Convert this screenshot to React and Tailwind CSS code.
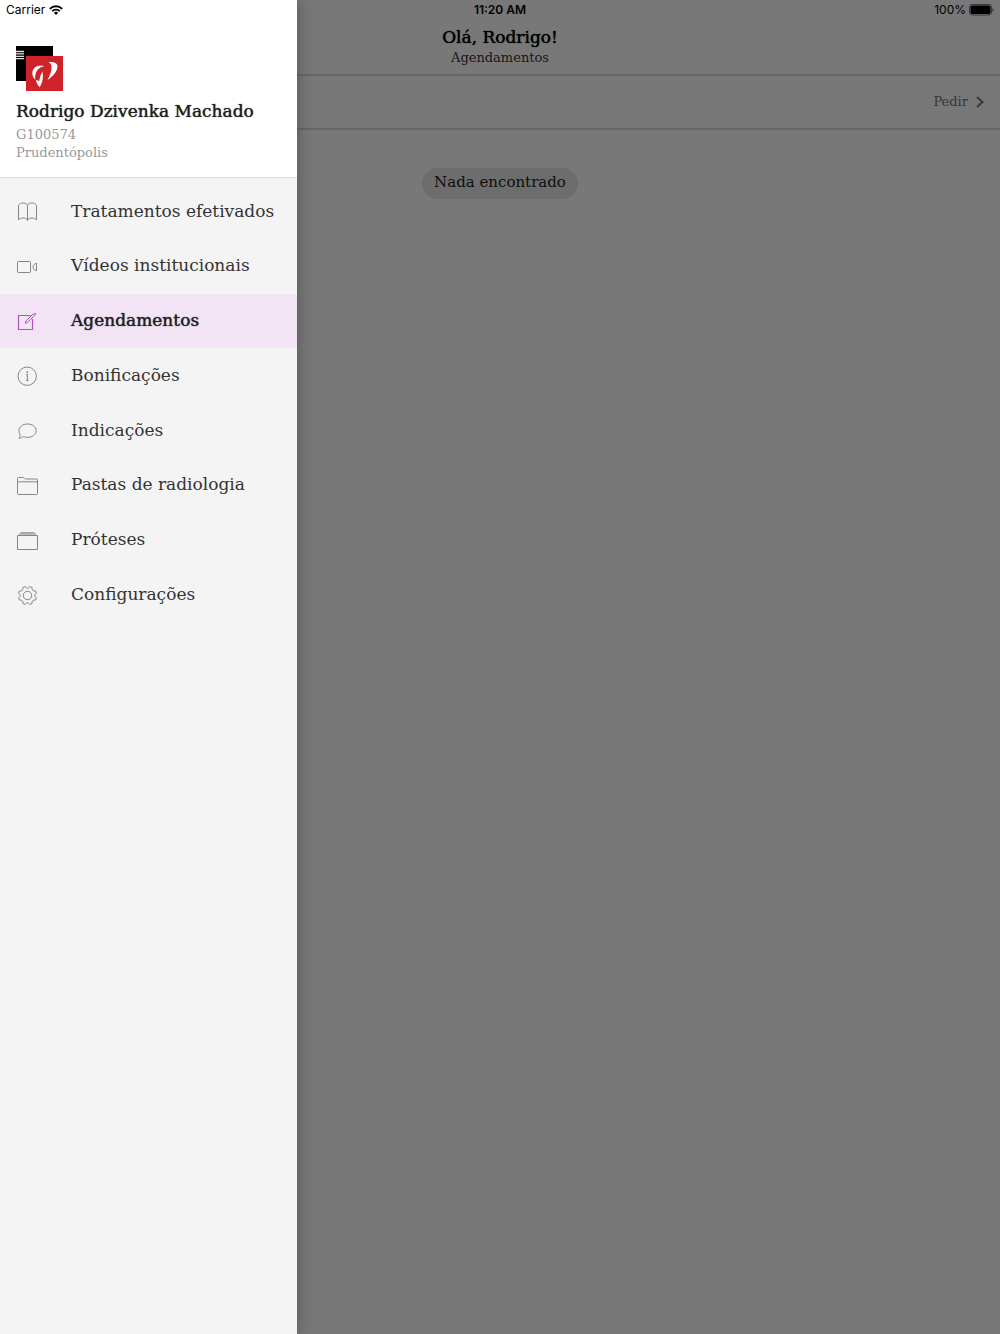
import { useState } from "react";
import clsx from "clsx";

const Icon = ({ children }) => (
	<svg
		viewBox="0 0 24 24"
		className="h-6 w-6 shrink-0"
		fill="none"
		stroke="currentColor"
		strokeWidth="1"
		strokeLinejoin="round"
		aria-hidden="true"
	>
		{children}
	</svg>
);

const BookIcon = () => (
	<Icon>
		<path d="M12.500 6.500c-.6-1.700-2.200-2.500-4.200-2.500-2.100 0-4 .7-4.800 2.500V21c1-1.500 2.500-2 4.500-2s3.700.5 4.500 2.300c.8-1.800 2.500-2.300 4.500-2.300s3.500.5 4.500 2V6.500c-.8-1.800-2.700-2.500-4.800-2.500-2 0-3.600.8-4.200 2.500zv14.800" />
	</Icon>
);

const VideoIcon = () => (
	<Icon>
		<rect x="2.500" y="7.500" width="13" height="11" rx="0.800" />
		<path d="M21.500 9.300v7.400c-2-.4-3.500-1.900-3.500-3.700s1.500-3.300 3.500-3.700z" />
	</Icon>
);

const ComposeIcon = () => (
	<Icon>
		<path d="M15.500 6.500h-12v14h14V10" strokeWidth="1.200" strokeLinejoin="miter" />
		<path d="M10.300 14.200l.6-2.200 7.400-7.200 1.500 1.500-7.400 7.200zM19.500 4.600l.6-.6 1 1-.6.6" />
	</Icon>
);

const InfoIcon = () => (
	<Icon>
		<circle cx="12.200" cy="12.200" r="9.200" />
		<path d="M11.200 10.500h1.200v6M11.200 16.500h2.400" strokeWidth="1.100" />
		<circle cx="12.200" cy="8.200" r="0.900" fill="currentColor" stroke="none" />
	</Icon>
);

const ChatIcon = () => (
	<Icon>
		<path d="M12.600 6c4.800 0 8.600 2.900 8.600 6.700s-3.800 6.700-8.600 6.700c-1.500 0-2.800-.3-4-.8-1.300.9-3 1.500-4.700 1.500.9-.9 1.400-2.200 1.200-3.700-.8-1.100-1.200-2.300-1.200-3.700C3.900 8.900 7.800 6 12.600 6z" />
	</Icon>
);

const FolderIcon = () => (
	<Icon>
		<path d="M2.500 8.800V5.400c0-.6.3-.9.900-.9h4.500c1.400 0 1.300 1.500 2.700 1.500h11c.6 0 .9.300.9.900v13.700c0 .6-.3.900-.9.900H3.400c-.6 0-.9-.3-.9-.9V8.800h20" />
	</Icon>
);

const AlbumsIcon = () => (
	<Icon>
		<path d="M2.500 7.500h20v14h-20z" strokeLinejoin="miter" />
		<path d="M4 6h17M5.500 4.800h14" />
	</Icon>
);

// eight teeth, with a round notch every 45 degrees
const polar = (radius, deg) => {
	const a = (deg * Math.PI) / 180;
	return `${12.5 + radius * Math.cos(a)} ${12.5 + radius * Math.sin(a)}`;
};
const gearPath =
	[0, 45, 90, 135, 180, 225, 270, 315]
		.map(
			(deg, i) =>
				`${i === 0 ? "M" : "L"}${polar(9.2, deg - 15)}Q${polar(5.8, deg)} ${polar(9.2, deg + 15)}`
		)
		.join("") + "Z";

const GearIcon = () => (
	<Icon>
		<circle cx="12.500" cy="12.500" r="4.200" />
		<path d={gearPath} />
	</Icon>
);

const Logo = () => (
	<svg viewBox="0 0 47 45" className="h-[45px] w-[47px]" role="img" aria-label="Logo">
		<path fill="#000" d="M0 0h37v35H0z" />
		<path stroke="#ddd" strokeWidth="1.300" d="M0 5.500h8M0 7.900h8M0 10.300h8M0 12.700h8" />
		<path fill="#cf2229" d="M10 10h37v35H10z" />
		<g fill="#fff">
			<path d="M28.300 20.200C23 17.800 16.400 21 16.300 27c0 3 1.400 5.300 3.200 6.800-.9-4.600.1-12 8.800-13.600z" />
			<path d="M26.300 25.500c1.500 5 .2 11.500-2.600 15.800-2-2.500-3.400-4.600-3.800-7.300 1.300.6 2.300.4 3.200 1.300.7-3.300 1.600-6.600 3.200-9.800z" />
			<path d="M32.500 16.300c4-1 8.300-.3 8.900 3.500.6 4.700-4 10.500-9.900 14.200 2.500-4.500 4.400-9.500 4.100-13.200-.2-2.300-1.100-3.500-3.100-4.500z" />
		</g>
	</svg>
);

const WifiIcon = () => (
	<svg viewBox="0 0 14 10" className="h-[10px] w-[14px]" aria-hidden="true">
		<g fill="none" stroke="#000" strokeWidth="1.900">
			<path d="M.8 3.800a8.800 8.800 0 0 1 12.400 0" />
			<path d="M3.200 6.200a5.400 5.400 0 0 1 7.600 0" />
		</g>
		<path d="M7 9.900L4.900 7.800a3 3 0 0 1 4.200 0z" />
	</svg>
);

const BatteryIcon = () => (
	<svg viewBox="0 0 25 12" className="h-3 w-[25px]" aria-hidden="true">
		<rect x="0.500" y="0.500" width="22" height="10.500" rx="2.500" fill="none" stroke="#777" />
		<rect x="1.500" y="1.500" width="20" height="8.500" rx="1.500" />
		<path d="M23.500 4v4c1.600-.6 1.600-3.400 0-4z" fill="#777" />
	</svg>
);

const menu = [
	{ label: "Tratamentos efetivados", icon: BookIcon },
	{ label: "Vídeos institucionais", icon: VideoIcon },
	{ label: "Agendamentos", icon: ComposeIcon },
	{ label: "Bonificações", icon: InfoIcon },
	{ label: "Indicações", icon: ChatIcon },
	{ label: "Pastas de radiologia", icon: FolderIcon },
	{ label: "Próteses", icon: AlbumsIcon },
	{ label: "Configurações", icon: GearIcon },
];

const Drawer = ({ active, onSelect }) => (
	<aside className="absolute inset-y-0 left-0 w-[297px] bg-[#f4f4f4] shadow-[0_0_16px_rgba(0,0,0,0.3)]">
		<header className="border-b border-[#dcdcdc] bg-white px-4 pb-[15px]">
			<div className="-ml-[10px] flex h-5 items-center gap-1 font-['Inter',sans-serif] text-xs text-black">
				<span>Carrier</span>
				<WifiIcon />
			</div>
			<div className="pt-[26px]">
				<Logo />
			</div>
			<h2 className="mt-2 text-[17px] leading-6 whitespace-nowrap text-[#222] [text-shadow:0_0_1px_currentColor]">
				Rodrigo Dzivenka Machado
			</h2>
			<p className="mt-[3px] text-[13px] leading-[18px] text-[#999]">G100574</p>
			<p className="text-[13px] leading-[18px] text-[#999]">Prudentópolis</p>
		</header>
		<nav className="pt-[6px]">
			<ul className="grid h-[438px] auto-rows-fr">
				{menu.map(({ label, icon: MenuIcon }) => (
					<li key={label}>
						<a
							href="#"
							onClick={() => onSelect(label)}
							className={clsx(
								"flex h-full items-center gap-8 pl-[15px] whitespace-nowrap",
								active === label
									? "bg-[#f2e4f5] text-[#b052c0]"
									: "text-[#858585]"
							)}
						>
							<MenuIcon />
							<span
								className={clsx(
									"text-[17px]",
									active === label
										? "text-[#222] [text-shadow:0_0_1px_currentColor]"
										: "text-[#333]"
								)}
							>
								{label}
							</span>
						</a>
					</li>
				))}
			</ul>
		</nav>
	</aside>
);

export default function App() {
	const [active, setActive] = useState("Agendamentos");

	return (
		<div className="relative min-h-screen bg-white font-['DejaVu_Serif',serif]">
			<header className="border-b-2 border-[#dadada] text-center text-black">
				<div className="grid h-5 grid-cols-3 items-center px-[6px] font-['Inter',sans-serif] text-xs">
					<span className="col-start-2 font-semibold">11:20 AM</span>
					<span className="flex items-center justify-end gap-[3px]">
						100%
						<BatteryIcon />
					</span>
				</div>
				<div className="h-[54px] pt-[5px]">
					<h1 className="text-[17px] leading-6 [text-shadow:0_0_1px_currentColor]">
						Olá, Rodrigo!
					</h1>
					<p className="text-[13px] leading-[18px] text-[#333]">{active}</p>
				</div>
			</header>
			<div className="flex h-[54px] items-center justify-end border-b-2 border-[#dadada] px-4">
				<button className="flex items-center gap-2 text-[13px] text-[#777]">
					Pedir
					<svg
						viewBox="0 0 8 12"
						className="h-3 w-2"
						fill="none"
						stroke="currentColor"
						strokeWidth="2"
						aria-hidden="true"
					>
						<path d="M1 1l5.500 5L1 11" />
					</svg>
				</button>
			</div>
			<main className="flex justify-center pt-[38px]">
				<p className="rounded-full bg-[#e8e8e8] px-3 pb-[2px] text-[15px] leading-[29px] text-[#222]">
					Nada encontrado
				</p>
			</main>

			<div className="absolute inset-0 bg-black/53" />
			<Drawer active={active} onSelect={setActive} />
		</div>
	);
}
